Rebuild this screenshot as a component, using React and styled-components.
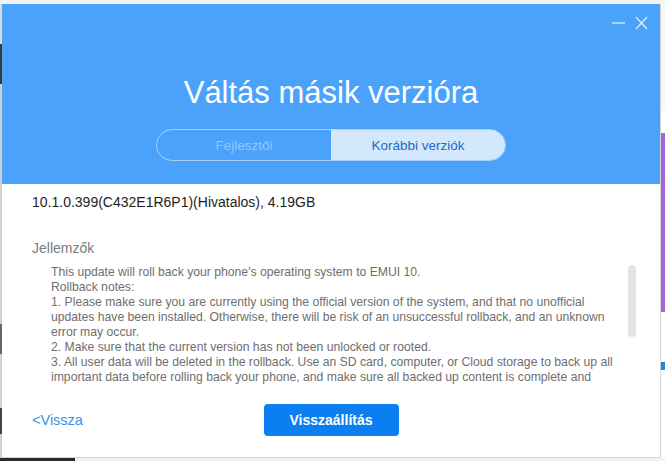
import React from 'react';
import styled, { createGlobalStyle } from 'styled-components';

const notes = [
  'This update will roll back your phone\'s operating system to EMUI 10.',
  'Rollback notes:',
  '1. Please make sure you are currently using the official version of the system, and that no unofficial updates have been installed. Otherwise, there will be risk of an unsuccessful rollback, and an unknown error may occur.',
  '2. Make sure that the current version has not been unlocked or rooted.',
  '3. All user data will be deleted in the rollback. Use an SD card, computer, or Cloud storage to back up all important data before rolling back your phone, and make sure all backed up content is complete and valid.',
  '4. Make sure your phone has at least 50% battery power before rolling back.',
  '5. After rolling back, some apps may need to be updated to the version compatible with EMUI 10.',
];

function App() {
  return (
    <Page>
      <GlobalStyle />
      <TopStrip />
      <Middle>
        <LeftEdge />
        <Dialog>
          <Header>
            <Controls>
              <svg width="13" height="14" viewBox="0 0 13 14">
                <line x1="0" y1="7" x2="13" y2="7" stroke="#dcedff" strokeWidth="1.3" />
              </svg>
              <svg width="13" height="14" viewBox="0 0 13 14">
                <path d="M1 1 L12 13 M12 1 L1 13" stroke="#dcedff" strokeWidth="1.3" fill="none" />
              </svg>
            </Controls>
            <Title>Váltás másik verzióra</Title>
            <Segmented>
              <Segment>Fejlesztői</Segment>
              <Segment $active>Korábbi verziók</Segment>
            </Segmented>
          </Header>
          <Body>
            <Version>10.1.0.399(C432E1R6P1)(Hivatalos), 4.19GB</Version>
            <SectionLabel>Jellemzők</SectionLabel>
            <NotesArea>
              <Notes>
                {notes.map((n, i) => (
                  <NoteLine key={i}>{n}</NoteLine>
                ))}
              </Notes>
              <ScrollTrack>
                <ScrollThumb style={{ height: 72 }} />
              </ScrollTrack>
            </NotesArea>
          </Body>
          <Footer>
            <BackLink href="#">&lt;Vissza</BackLink>
            <RestoreButton>Visszaállítás</RestoreButton>
            <span />
          </Footer>
        </Dialog>
        <RightEdge>
          <EdgeBlock $h={107} $bg="#f7f7f7" />
          <EdgeBlock $h={22} $bg="#ffffff" />
          <EdgeBlock $h={179} $bg="#a566dc" />
          <EdgeBlock $h={50} $bg="#ffffff" />
          <EdgeBlock $h={8} $bg="#2f7fd8" />
          <EdgeBlock $h={100} $bg="#ffffff" />
        </RightEdge>
      </Middle>
      <BottomStrip>
        <DarkCorner />
      </BottomStrip>
    </Page>
  );
}

export default App;

const GlobalStyle = createGlobalStyle`
  body {
    margin: 0;
    background: #f4f4f4;
    font-family: "Liberation Sans", Arial, sans-serif;
  }
`;

const Page = styled.div`
  width: 665px;
  height: 461px;
  display: flex;
  flex-direction: column;
  overflow: hidden;
`;

const TopStrip = styled.div`
  height: 4px;
  background: #f3f3f3;
`;

const Middle = styled.div`
  display: flex;
  height: 454px;
`;

const LeftEdge = styled.div`
  width: 2px;
  background: linear-gradient(
    #d9d9d9 0 40px,
    #3a3a3a 40px 80px,
    #cfcfcf 80px 320px,
    #666 320px 350px,
    #d0d0d0 350px 404px,
    #444 404px 430px,
    #d0d0d0 430px
  );
`;

const RightEdge = styled.div`
  width: 4px;
  display: flex;
  flex-direction: column;
  background: #fff;
`;

const EdgeBlock = styled.div`
  height: ${p => p.$h}px;
  flex-shrink: 0;
  background: ${p => p.$bg};
`;

const BottomStrip = styled.div`
  height: 3px;
  background: #f2f2f2;
`;

const DarkCorner = styled.div`
  width: 75px;
  height: 3px;
  background: #2a2a2a;
`;

const Dialog = styled.div`
  width: 659px;
  box-sizing: border-box;
  background: #fff;
  border-right: 1px solid #d4d4d4;
  border-bottom: 1px solid #d4d4d4;
  display: flex;
  flex-direction: column;
`;

const Header = styled.div`
  height: 180px;
  box-sizing: border-box;
  background: #4ba2fb;
  padding-top: 12px;
  display: flex;
  flex-direction: column;
  align-items: center;
`;

const Controls = styled.div`
  align-self: stretch;
  height: 14px;
  display: flex;
  justify-content: flex-end;
  gap: 10px;
  padding-right: 12px;
`;

const Title = styled.h1`
  margin: 45px 0 0;
  font-size: 31px;
  line-height: 36px;
  font-weight: normal;
  color: #ffffff;
`;

const Segmented = styled.div`
  margin-top: 18px;
  width: 350px;
  height: 32px;
  display: grid;
  grid-template-columns: 1fr 1fr;
  border: 1px solid #a6d1fd;
  border-radius: 16px;
  box-sizing: border-box;
  overflow: hidden;
`;

const Segment = styled.div`
  display: flex;
  align-items: center;
  justify-content: center;
  font-size: 13.5px;
  color: ${p => (p.$active ? '#1f68c4' : '#90c8fd')};
  background: ${p => (p.$active ? '#d3e8fd' : 'transparent')};
`;

const Body = styled.div`
  padding: 8px 0 0 30px;
  display: flex;
  flex-direction: column;
`;

const Version = styled.div`
  font-size: 14px;
  line-height: 20px;
  color: #1e1e1e;
`;

const SectionLabel = styled.div`
  margin-top: 26px;
  font-size: 14px;
  line-height: 20px;
  color: #7c7c7c;
`;

const NotesArea = styled.div`
  margin: 7px 0 0 19px;
  height: 120px;
  display: flex;
  gap: 6px;
`;

const Notes = styled.div`
  width: 571px;
  height: 120px;
  overflow: hidden;
  font-size: 12.2px;
  line-height: 15px;
  color: #6e6e6e;
`;

const NoteLine = styled.div``;

const ScrollTrack = styled.div`
  width: 8px;
  height: 120px;
`;

const ScrollThumb = styled.div`
  width: 8px;
  border-radius: 4px;
  background: #e3e3e3;
`;

const Footer = styled.div`
  margin-top: 19px;
  padding: 0 30px;
  display: grid;
  grid-template-columns: 1fr auto 1fr;
  align-items: center;
`;

const BackLink = styled.a`
  font-size: 14.5px;
  color: #3a8fe2;
  text-decoration: none;
`;

const RestoreButton = styled.button`
  width: 135px;
  height: 32px;
  border: none;
  border-radius: 4px;
  background: #0b7ff2;
  color: #fff;
  font-family: "Liberation Sans", Arial, sans-serif;
  font-size: 14px;
  font-weight: bold;
`;
